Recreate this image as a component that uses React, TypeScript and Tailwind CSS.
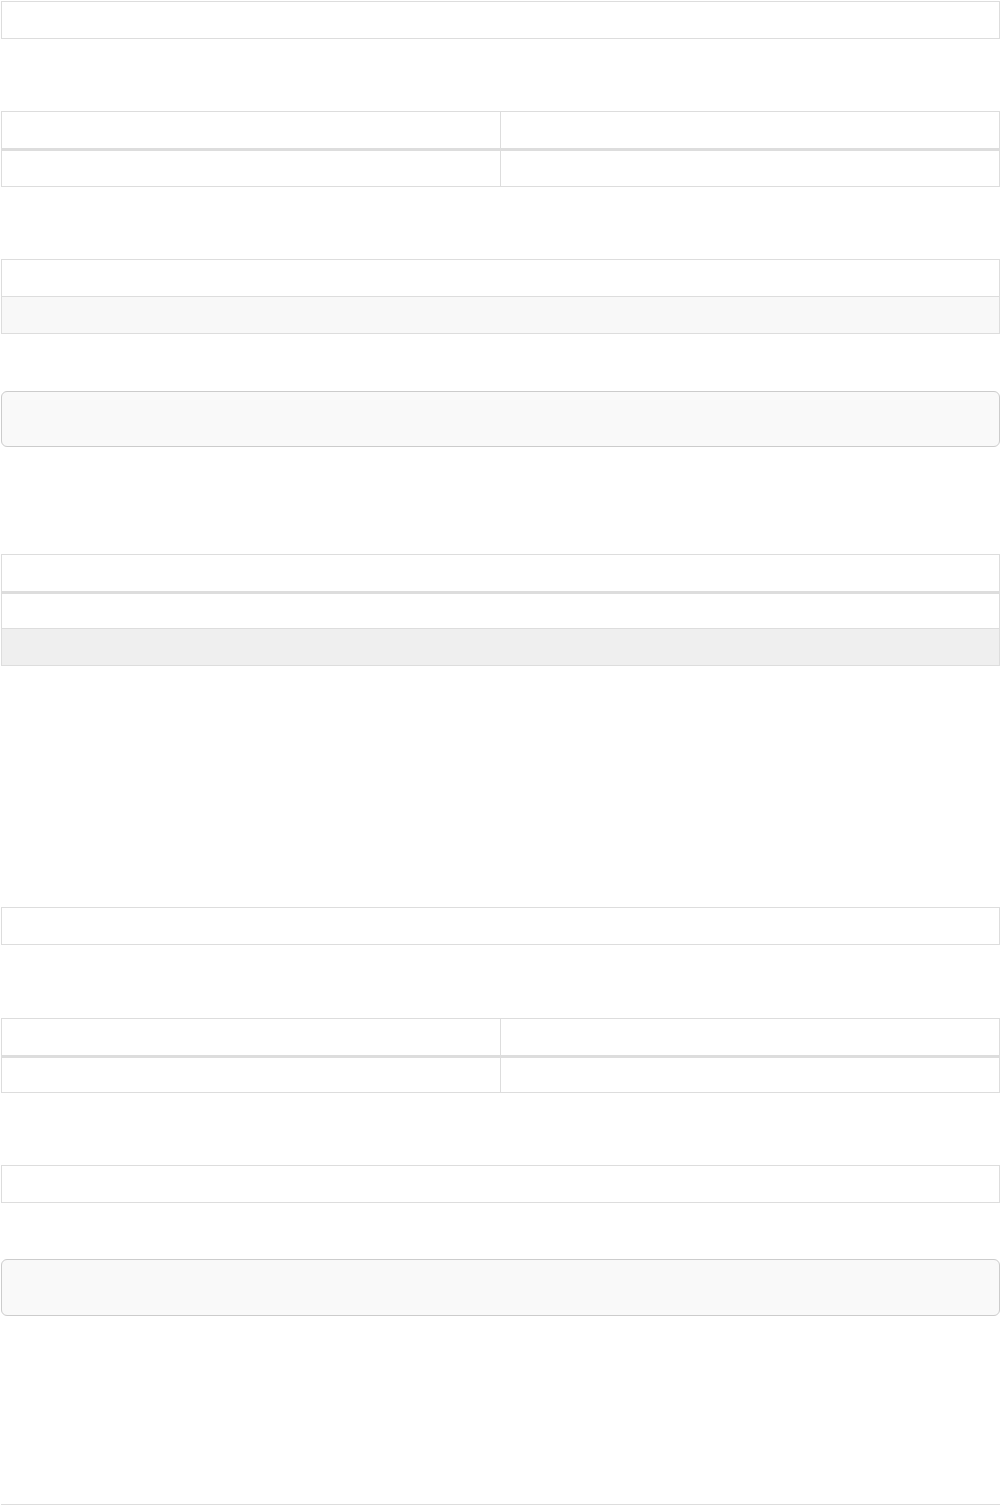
const line = 'border-[#dddddd]'

function Box({ className = '' }: { className?: string }) {
  return <div className={`h-[38px] border ${line} ${className}`} />
}

function TwoColTable({ bodyH, className = '' }: { bodyH: string; className?: string }) {
  return (
    <div className={`border ${line} ${className}`}>
      <div className={`flex h-[39px] border-b-[3px] ${line}`}>
        <div className={`w-[499px] border-r ${line}`} />
        <div className="flex-1" />
      </div>
      <div className={`flex ${bodyH}`}>
        <div className={`w-[499px] border-r ${line}`} />
        <div className="flex-1" />
      </div>
    </div>
  )
}

function Panel({ className = '' }: { className?: string }) {
  return <div className={`rounded-[6px] border border-[#cccccc] bg-[#f9f9f9] ${className}`} />
}

export default function App() {
  return (
    <div className="min-h-[1505px] bg-white pl-[1px] pt-[1px] font-['Liberation_Sans',sans-serif]">
      <div className="flex w-[999px] flex-col">
        <Box />

        <TwoColTable bodyH="h-[35px]" className="mt-[72px]" />

        <div className={`mt-[72px] border ${line}`}>
          <div className={`h-[37px] border-b ${line}`} />
          <div className="h-[36px] bg-[#f8f8f8]" />
        </div>

        <Panel className="mt-[57px] h-[56px]" />

        <div className={`mt-[107px] border ${line}`}>
          <div className={`h-[39px] border-b-[3px] ${line}`} />
          <div className={`h-[35px] border-b ${line}`} />
          <div className="h-[36px] bg-[#efefef]" />
        </div>

        <Box className="mt-[241px]" />

        <TwoColTable bodyH="h-[34px]" className="mt-[73px]" />

        <Box className="mt-[72px]" />

        <Panel className="mt-[56px] h-[57px]" />

        <div className={`mt-[188px] h-[40px] border-t ${line}`} />
      </div>
    </div>
  )
}
